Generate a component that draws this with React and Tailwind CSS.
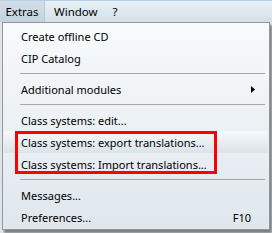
import React from "react";

function Sep() {
  return (
    <div className="h-[9px] flex items-center pl-[17px] pr-[4px]">
      <div className="h-px w-full bg-[#a7a7a7]" />
    </div>
  );
}

function Item({ label, right, arrow, hover }) {
  return (
    <div
      className={
        "h-[22px] flex items-center pl-[17px] pr-[17px] mx-[1px] " +
        (hover
          ? "bg-gradient-to-b from-[#f7f9fa] to-[#d9e3ea] rounded-[2px]"
          : "")
      }
    >
      <span className="flex-1 whitespace-nowrap">{label}</span>
      {right && <span className="whitespace-nowrap">{right}</span>}
      {arrow && (
        <svg width="4" height="7" viewBox="0 0 4 7" className="mr-[-4px]">
          <path d="M0 0 L4 3.5 L0 7 Z" fill="#000" />
        </svg>
      )}
    </div>
  );
}

export default function App() {
  return (
    <div
      className="w-[272px] h-[233px] relative overflow-hidden bg-[#dde5eb] text-[11px] text-black leading-none"
      style={{ fontFamily: "'Noto Sans', 'Open Sans', sans-serif" }}
    >
      {/* menubar */}
      <div className="h-[22px] border-t border-[#b3cfe8] bg-gradient-to-b from-[#eaf1f5] to-[#d3e0e9] flex items-stretch text-[11.5px]">
        <div className="w-[45px] flex items-center justify-center bg-gradient-to-b from-[#d3dfe8] to-[#c2d3df] border-r border-[#b9c9d5]">
          Extras
        </div>
        <div className="flex items-center pl-[9px]">Window</div>
        <div className="flex items-center pl-[15px]">?</div>
      </div>
      {/* dropdown */}
      <div className="ml-[2px] w-[268px] border border-[#979797] bg-gradient-to-b from-[#f8fafb] to-[#dfe7ed] pt-[2px] pb-[1px] shadow-[2px_3px_2px_rgba(0,0,0,0.45)]">
        <Item label="Create offline CD" />
        <Item label="CIP Catalog" />
        <Sep />
        <Item label="Additional modules" arrow />
        <Sep />
        <Item label="Class systems: edit..." />
        <Item label="Class systems: export translations..." hover />
        <Item label="Class systems: Import translations..." />
        <Sep />
        <Item label="Messages..." />
        <Item label="Preferences..." right="F10" />
      </div>
      {/* annotation */}
      <div className="absolute left-[15px] top-[131px] w-[202px] h-[43px] border-[3px] border-[#ff0000]" />
    </div>
  );
}
